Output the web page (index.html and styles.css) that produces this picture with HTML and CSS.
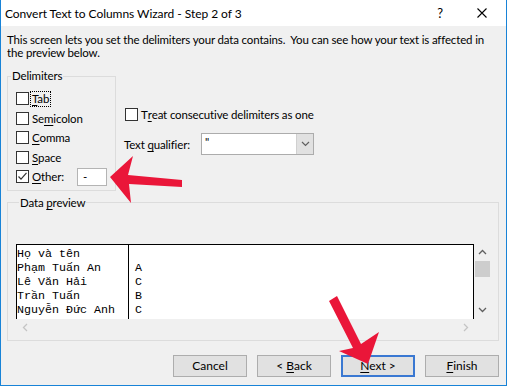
FILE: index.html
```html
<html lang="en">
<head>
    <meta charset="UTF-8">
    <title>Convert Text to Columns Wizard - Step 2 of 3</title>
    <link rel="stylesheet" href="styles.css">
</head>
<body>
    <div class="window">
        <div class="titlebar">
            <span class="title">Convert Text to Columns Wizard - Step 2 of 3</span>
            <span class="help">?</span>
            <span class="close">
                <svg width="10" height="10" viewBox="0 0 10 10"><path d="M0.5 0.5L9.5 9.5M9.5 0.5L0.5 9.5" stroke="#000" stroke-width="1.1" fill="none"/></svg>
            </span>
        </div>

        <p class="intro">This screen lets you set the delimiters your data contains.&nbsp; You can see how your text is affected in<br>the preview below.</p>

        <div class="options">
            <fieldset class="group delimiters">
                <legend>Delimiters</legend>
                <label class="check"><span class="box"></span><span class="focus"><u>T</u>ab</span></label>
                <label class="check"><span class="box"></span>Se<u>m</u>icolon</label>
                <label class="check"><span class="box"></span><u>C</u>omma</label>
                <label class="check"><span class="box"></span><u>S</u>pace</label>
                <label class="check">
                    <span class="box"><svg width="11" height="11" viewBox="0 0 11 11"><path d="M1.5 5.5L4 8.2L9.5 1.8" stroke="#333" stroke-width="1.2" fill="none"/></svg></span>
                    <span class="other-label"><u>O</u>ther:</span>
                    <span class="field">-</span>
                </label>
            </fieldset>

            <div class="side">
                <label class="check treat"><span class="box"></span>T<u>r</u>eat consecutive delimiters as one</label>
                <div class="qualifier">
                    <span class="qualifier-label">Text <u>q</u>ualifier:</span>
                    <div class="select">
                        <span class="value">"</span>
                        <span class="drop"><svg width="9" height="6" viewBox="0 0 9 6"><path d="M1 1L4.5 4.5L8 1" stroke="#606060" stroke-width="1.2" fill="none"/></svg></span>
                    </div>
                </div>
            </div>
        </div>

        <fieldset class="group preview">
            <legend>Data <u>p</u>review</legend>
            <div class="grid">
                <div class="sheet">
                    <div class="col col-a">
                        <div>Họ và tên</div>
                        <div>Phạm Tuấn An</div>
                        <div>Lê Văn Hải</div>
                        <div>Trần Tuấn</div>
                        <div>Nguyễn Đức Anh</div>
                    </div>
                    <div class="col col-b">
                        <div>&nbsp;</div>
                        <div>A</div>
                        <div>C</div>
                        <div>B</div>
                        <div>C</div>
                    </div>
                </div>
                <div class="vscroll">
                    <span class="arrow"><svg width="9" height="6" viewBox="0 0 9 6"><path d="M1 5L4.5 1.5L8 5" stroke="#606060" stroke-width="1.3" fill="none"/></svg></span>
                    <span class="thumb"></span>
                    <span class="rest"></span>
                    <span class="arrow"><svg width="9" height="6" viewBox="0 0 9 6"><path d="M1 1L4.5 4.5L8 1" stroke="#606060" stroke-width="1.3" fill="none"/></svg></span>
                </div>
                <div class="hscroll">
                    <span class="arrow"><svg width="6" height="9" viewBox="0 0 6 9"><path d="M5 1L1.5 4.5L5 8" stroke="#c4c4c4" stroke-width="1.3" fill="none"/></svg></span>
                    <span class="arrow"><svg width="6" height="9" viewBox="0 0 6 9"><path d="M1 1L4.5 4.5L1 8" stroke="#c4c4c4" stroke-width="1.3" fill="none"/></svg></span>
                </div>
            </div>
        </fieldset>

        <div class="buttons">
            <button>Cancel</button>
            <button>&lt; <u>B</u>ack</button>
            <button class="default"><u>N</u>ext &gt;</button>
            <button><u>F</u>inish</button>
        </div>

        <!-- red pointers drawn over the dialog -->
        <svg class="arrows" width="507" height="386" viewBox="0 0 507 386">
            <polygon points="110,177 133,156 128,175 182,180 182,187 129,184 131,203" fill="#ea1639"/>
            <polygon points="329,301 337,296 361,344 379,332 368,364 339,351 353,348" fill="#ea1639"/>
        </svg>
    </div>
</body>
</html>
```

FILE: styles.css
```css
body {
    margin: 0;
    background: #fff;
}

.window {
    position: relative;
    width: 507px;
    height: 386px;
    box-sizing: border-box;
    border: 1px solid #1883d7;
    border-top: none;
    background: #f0f0f0;
    font-family: Lato, "Liberation Sans", sans-serif;
    font-size: 11.5px;
    letter-spacing: -0.15px;
    color: #000;
    overflow: hidden;
}

u {
    text-decoration-thickness: 1px;
    text-underline-offset: 2px;
}

/* title bar */
.titlebar {
    height: 26px;
    background: #fff;
    display: flex;
    align-items: center;
    padding-left: 4px;
}

.title {
    flex: 1;
    font-size: 12px;
    letter-spacing: -0.05px;
}

.help {
    margin-right: 34px;
    font-size: 13px;
}

.close {
    display: flex;
    margin-right: 19px;
}

.intro {
    margin: 7px 0 0 6px;
    line-height: 13px;
    white-space: nowrap;
}

/* group boxes */
.options {
    display: flex;
    align-items: flex-start;
    margin-top: 10px;
}

.group {
    margin: 0;
    padding: 0;
    border: 1px solid #dcdcdc;
    min-width: 0;
}

.group legend {
    margin-left: 3px;
    padding: 0 1px;
    line-height: 14px;
}

.delimiters {
    margin-left: 6px;
    width: 109px;
    box-sizing: border-box;
    padding: 6px 0 3px 0;
}

.check {
    display: flex;
    align-items: center;
    height: 19.5px;
    margin-left: 8px;
}

.box {
    width: 13px;
    height: 13px;
    box-sizing: border-box;
    border: 1px solid #333;
    background: #fff;
    margin-right: 3px;
    display: flex;
    align-items: center;
    justify-content: center;
    flex-shrink: 0;
}

.focus {
    outline: 1px dotted #000;
    outline-offset: 0;
    padding: 0 1px;
    margin-left: -1px;
    line-height: 14px;
}

.other-label {
    width: 45px;
}

.field {
    width: 30px;
    height: 18px;
    box-sizing: border-box;
    border: 1px solid #b4b4b4;
    background: #fff;
    padding-left: 5px;
    line-height: 15px;
}

.side {
    margin-left: 8px;
}

.treat {
    margin: 36px 0 0 1px;
}

.qualifier {
    display: flex;
    align-items: center;
    margin-top: 8.5px;
}

.qualifier-label {
    width: 77px;
}

.select {
    display: flex;
    width: 113px;
    height: 22px;
    box-sizing: border-box;
    border: 1px solid #acacac;
    background: #fff;
}

.value {
    flex: 1;
    padding-left: 3px;
    line-height: 16px;
}

.drop {
    width: 16px;
    background: #e1e1e1;
    border-left: 1px solid #d0d0d0;
    display: flex;
    align-items: center;
    justify-content: center;
}

/* data preview */
.preview {
    margin: 5px 7px 0 6px;
    padding: 34px 0 4px 8px;
}

.grid {
    display: grid;
    grid-template-columns: 458px 17px;
    grid-template-rows: 75px 17px;
}

.sheet {
    display: flex;
    background: #fff;
    border: 1px solid #000;
    border-bottom: none;
    overflow: hidden;
    font-family: "Liberation Mono", monospace;
    font-size: 11.67px;
    letter-spacing: 0;
    line-height: 14px;
}

.col {
    padding-top: 2px;
    white-space: nowrap;
}

.col-a {
    width: 111px;
    border-right: 1px solid #000;
}

.col-b {
    padding-left: 6px;
}

.vscroll {
    display: flex;
    flex-direction: column;
    background: #f0f0f0;
}

.vscroll .arrow {
    height: 17px;
    display: flex;
    align-items: center;
    justify-content: center;
}

.thumb {
    height: 16px;
    margin: 0 1px;
    background: #cdcdcd;
}

.rest {
    flex: 1;
}

.hscroll {
    display: flex;
    justify-content: space-between;
}

.hscroll .arrow {
    width: 17px;
    display: flex;
    align-items: center;
    justify-content: center;
}

/* buttons */
.buttons {
    display: flex;
    justify-content: flex-end;
    gap: 10px;
    margin-top: 14px;
    padding-right: 7px;
}

button {
    width: 74px;
    height: 22px;
    box-sizing: border-box;
    border: 1px solid #adadad;
    background: #e1e1e1;
    font-family: Lato, "Liberation Sans", sans-serif;
    font-size: 12px;
    color: #000;
    padding: 0;
}

button.default {
    border: 2px solid #3a78d2;
}

.arrows {
    position: absolute;
    left: -1px;
    top: 0;
    pointer-events: none;
}
```
